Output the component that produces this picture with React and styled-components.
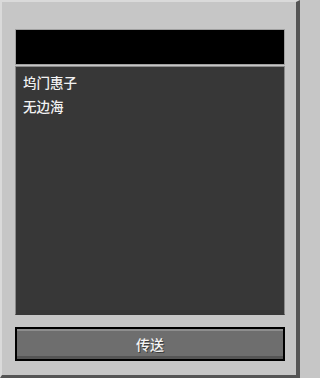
import React from 'react'
import styled, { createGlobalStyle } from 'styled-components'

const GlobalStyle = createGlobalStyle`
  html, body {
    margin: 0;
    padding: 0;
    background: #c6c6c6;
  }
  * { box-sizing: border-box; }
`

const players = ['坞门惠子', '无边海']

function App() {
  return (
    <>
      <GlobalStyle />
      <Panel>
        <NameInput />
        <PlayerList>
          {players.map(name => (
            <PlayerRow key={name}>{name}</PlayerRow>
          ))}
        </PlayerList>
        <SendButton>传送</SendButton>
      </Panel>
    </>
  )
}

export default App

const Panel = styled.div`
  width: 300px;
  height: 378px;
  display: flex;
  flex-direction: column;
  background: #c6c6c6;
  border-top: 2px solid #dadada;
  border-left: 2px solid #dadada;
  border-right: 4px solid #555555;
  border-bottom: 3px solid #555555;
  padding: 27px 11px 14px 13px;
  font-family: "Noto Sans CJK SC", "Noto Sans", sans-serif;
`

const NameInput = styled.div`
  height: 36px;
  background: #000;
  border: 1px solid #a0a0a0;
`

const PlayerList = styled.div`
  flex: 1;
  margin-top: 1px;
  background: #373737;
  border: 1px solid #8b8b8b;
  border-bottom-color: #373737;
  padding: 3px 7px;
`

const PlayerRow = styled.div`
  height: 24px;
  line-height: 24px;
  font-size: 13.5px;
  font-weight: 500;
  color: #f2f2f2;
`

const SendButton = styled.div`
  margin-top: 12px;
  height: 34px;
  border: 2px solid #000;
  background: #6e6e6e;
  box-shadow: inset 0 2px 0 #8e8e8e, inset 0 -3px 0 #555555;
  display: flex;
  align-items: center;
  justify-content: center;
  font-size: 14px;
  font-weight: 500;
  color: #f4f4f4;
  text-shadow: 1px 1px 0 #3a3a3a;
`
